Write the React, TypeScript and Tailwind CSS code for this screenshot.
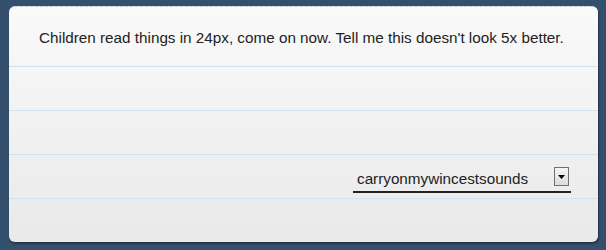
export default function App() {
  return (
    <div className="w-[606px] h-[250px] bg-[#34506d] pt-[6px] pl-[9px] font-['Liberation_Sans',Arial,sans-serif]">
      <div className="w-[589px] h-[236px] rounded-[6px] bg-gradient-to-b from-[#fafafa] to-[#e9e9e9] shadow-[1px_2px_2px_rgba(0,0,0,0.35)] overflow-hidden border-t border-dashed border-[#c9ced4]">
        {/* heading row */}
        <div className="h-[60px] border-b border-[#cfe3ee] pl-[30px] pt-[22px] text-[15.25px] text-[#222] leading-[18px]">
          Children read things in 24px, come on now. Tell me this doesn't look 5x better.
        </div>
        <div className="h-[44px] border-b border-[#cfe3ee]"></div>
        <div className="h-[44px] border-b border-[#cfe3ee]"></div>
        <div className="h-[44px] border-b border-[#cfe3ee] flex justify-end pr-[27px] pt-[11px]">
          <div className="w-[218px] h-[27px] border-b-2 border-[#222] flex items-start justify-between pl-[4px] pr-[2px]">
            <span className="text-[15.25px] text-[#222] leading-[18px] mt-[4px]">carryonmywincestsounds</span>
            <span className="w-[15px] h-[19px] mt-[1px] border border-[#707070] bg-gradient-to-b from-[#f4f4f4] to-[#dcdcdc] flex items-center justify-center">
              <svg width="7" height="4" viewBox="0 0 7 4">
                <path d="M0 0 H7 L3.5 4 Z" fill="#000" />
              </svg>
            </span>
          </div>
        </div>
      </div>
    </div>
  );
}
